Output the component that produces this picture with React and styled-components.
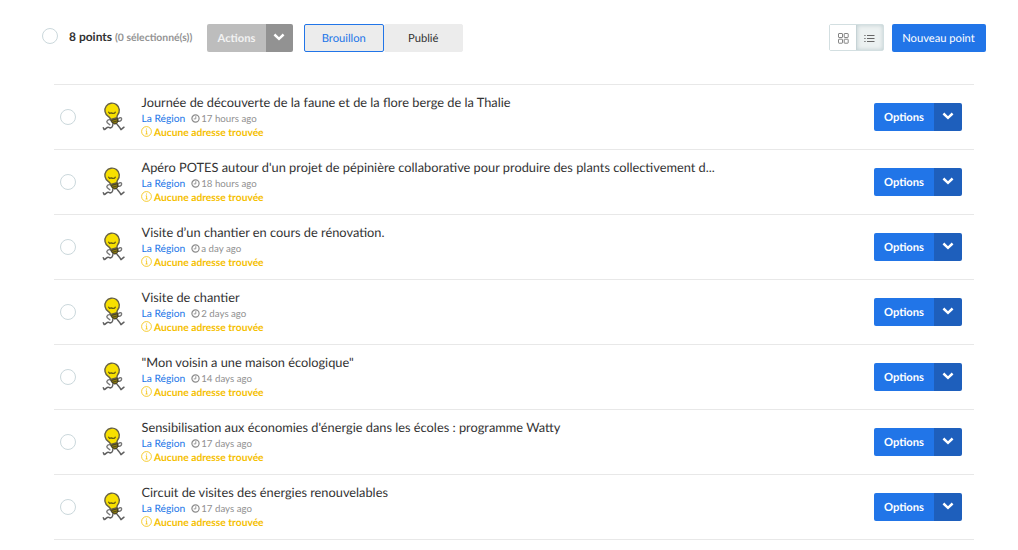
import React, { useState } from "react";
import styled, { createGlobalStyle } from "styled-components";

const points = [
  { title: "Journée de découverte de la faune et de la flore berge de la Thalie", date: "17 hours ago" },
  {
    title: "Apéro POTES autour d'un projet de pépinière collaborative pour produire des plants collectivement d...",
    date: "18 hours ago",
  },
  { title: "Visite d’un chantier en cours de rénovation.", date: "a day ago" },
  { title: "Visite de chantier", date: "2 days ago" },
  { title: "\"Mon voisin a une maison écologique\"", date: "14 days ago" },
  { title: "Sensibilisation aux économies d'énergie dans les écoles : programme Watty", date: "17 days ago" },
  { title: "Circuit de visites des énergies renouvelables", date: "17 days ago" },
];

function Chevron() {
  return (
    <svg width="12" height="8" viewBox="0 0 12 8" fill="none">
      <path d="M1.4 1.5 L6 5.8 L10.6 1.5" stroke="#fff" strokeWidth="2.4" />
    </svg>
  );
}

function Clock() {
  return (
    <svg width="9" height="9" viewBox="0 0 9 9" fill="none" stroke="#8c8c8c">
      <circle cx="4.5" cy="4.5" r="3.6" strokeWidth="1.2" />
      <path d="M4.8 2.2 V4.9 H2.7" strokeWidth="0.9" />
    </svg>
  );
}

function Info() {
  return (
    <svg width="11" height="11" viewBox="0 0 11 11" fill="none" stroke="#f5c000">
      <circle cx="5.5" cy="5.5" r="4.9" strokeWidth="0.8" />
      <path d="M5.5 2.5 V3.6 M4.7 4.8 H5.6 V8 M4.5 8 H6.6" strokeWidth="0.8" />
    </svg>
  );
}

function Bulb() {
  return (
    <svg width="28" height="32" viewBox="0 0 28 32" fill="none" strokeLinecap="round" strokeLinejoin="round">
      <path
        d="M12.5 19.2 C9 17.6 7 20 8.3 21.8 L10.8 23.8 M18.2 19.2 C19.6 16.5 22.6 15.8 22.6 17.9 C22.6 19.6 20.8 20.6 19 20.3"
        stroke="#777"
        strokeWidth="1.4"
      />
      <path
        d="M14 22.5 C13.8 26 12.4 27.8 9.8 26.4 C8.2 25.5 7 27.9 5.2 28.6 L4.3 26.7 M17.3 22 C18.6 24.8 20.4 25.4 22 28.7 L25 26.2"
        stroke="#606060"
        strokeWidth="1.5"
      />
      <path d="M11.8 17.8 L18 16.4 L19.3 20.6 L16 23.2 L12.9 21.4 Z" fill="#4b4420" stroke="#39351e" />
      <path
        d="M10.8 17 C10.6 16.3 10 15.9 9.2 15.4 A7.2 7.2 0 1 1 18.6 14 C18 14.8 17.9 15.6 18 16.6 L11.9 18.4 Z"
        fill="#f7df00"
        stroke="#666044"
        strokeWidth="1.4"
      />
      <path d="M9.6 11.2 L10.6 12.3 L12.2 11.9 L13.8 12.4 L15.6 12.2 L16.3 11.2" stroke="#5c5415" strokeWidth="1.2" />
      <path d="M13.5 20.2 L17.9 19 M14.6 22 L17.8 21" stroke="#b69f00" strokeWidth="0.7" />
    </svg>
  );
}

function GridIcon() {
  return (
    <svg width="11" height="11" viewBox="0 0 11 11" fill="none" stroke="#777" strokeWidth="0.9">
      <rect x="0.5" y="0.5" width="4" height="4" rx="0.5" />
      <rect x="6.2" y="0.5" width="4" height="4" rx="0.5" />
      <rect x="0.5" y="6.2" width="4" height="4" rx="0.5" />
      <rect x="6.2" y="6.2" width="4" height="4" rx="0.5" />
    </svg>
  );
}

function ListIcon() {
  return (
    <svg width="11" height="9" viewBox="0 0 11 9" stroke="#666" strokeWidth="1">
      <path d="M0.3 1.5 H1.6 M3 1.5 H10.5 M0.3 4.5 H1.6 M3 4.5 H10.5 M0.3 7.5 H1.6 M3 7.5 H10.5" />
    </svg>
  );
}

function App() {
  const [status, setStatus] = useState("draft");

  return (
    <Page>
      <GlobalStyle />
      <Toolbar>
        <Radio />
        <Count>
          8 points <small>(0 sélectionné(s))</small>
        </Count>
        <SplitButton $disabled>
          <SplitLabel $disabled>Actions</SplitLabel>
          <SplitToggle $disabled>
            <Chevron />
          </SplitToggle>
        </SplitButton>
        <Tabs>
          <Tab $active={status === "draft"} onClick={() => setStatus("draft")}>
            Brouillon
          </Tab>
          <Tab $active={status === "published"} onClick={() => setStatus("published")}>
            Publié
          </Tab>
        </Tabs>
        <Views>
          <View>
            <GridIcon />
          </View>
          <View $active>
            <ListIcon />
          </View>
        </Views>
        <NewButton>Nouveau point</NewButton>
      </Toolbar>
      <List>
        {points.map((point) => (
          <Row key={point.title}>
            <Radio />
            <Picture>
              <Bulb />
            </Picture>
            <Details>
              <Title>{point.title}</Title>
              <Meta>
                <Author>La Région</Author>
                <Clock />
                <span>{point.date}</span>
              </Meta>
              <Warning>
                <Info />
                <span>Aucune adresse trouvée</span>
              </Warning>
            </Details>
            <SplitButton>
              <SplitLabel>Options</SplitLabel>
              <SplitToggle>
                <Chevron />
              </SplitToggle>
            </SplitButton>
          </Row>
        ))}
      </List>
    </Page>
  );
}

const GlobalStyle = createGlobalStyle`
  * {
    box-sizing: border-box;
  }

  body {
    margin: 0;
    background: #fff;
    overflow: hidden;
    font-family: Lato, "Liberation Sans", sans-serif;
    text-rendering: geometricPrecision;
  }

  button {
    margin: 0;
    padding: 0;
    border: 0;
    font: inherit;
    text-rendering: inherit;
    cursor: pointer;
  }

  svg {
    display: block;
    flex: none;
  }
`;

const Page = styled.div`
  height: 550px;
  padding: 24px 44px 0 42px;
  color: #333;
`;

const Toolbar = styled.div`
  display: flex;
  height: 28px;
`;

const Radio = styled.span`
  flex: none;
  width: 16px;
  height: 16px;
  border: 1px solid #cbd8dc;
  border-radius: 50%;
  background: #fff;

  ${Toolbar} & {
    margin-top: 4px;
  }
`;

const Count = styled.div`
  width: 138px;
  margin-left: 11px;
  font-size: 12px;
  font-weight: 700;
  line-height: 26px;
  white-space: nowrap;

  small {
    color: #949494;
    font-size: 10.4px;
  }
`;

const SplitButton = styled.div`
  display: flex;
  flex: none;
  width: ${(props) => (props.$disabled ? "86px" : "88px")};
  height: 28px;
  border-radius: 2px;
  overflow: hidden;
`;

const SplitLabel = styled.button`
  flex: 1;
  background: ${(props) => (props.$disabled ? "#bdbdbd" : "#2175e8")};
  color: ${(props) => (props.$disabled ? "#f2f2f2" : "#fff")};
  font-size: 11.2px;
  font-weight: 700;
`;

const SplitToggle = styled.button`
  display: flex;
  justify-content: center;
  width: ${(props) => (props.$disabled ? "27px" : "28px")};
  padding: ${(props) => (props.$disabled ? "9px 1px 0 0" : "9px 0 0")};
  background: ${(props) => (props.$disabled ? "#929292" : "#1e5fbc")};
`;

const Tabs = styled.div`
  display: flex;
  width: 159px;
  margin-left: 11px;
`;

const Tab = styled.button`
  flex: 1;
  border: 1px solid ${(props) => (props.$active ? "#2175e8" : "#ececec")};
  border-radius: 2px;
  background: #ececec;
  color: ${(props) => (props.$active ? "#2175e8" : "#333")};
  font-size: 11.2px;
`;

const Views = styled.div`
  display: flex;
  width: 55px;
  height: 27px;
  margin-left: auto;
  border: 1px solid #d3dfe1;
  border-radius: 2px;
`;

const View = styled.button`
  display: flex;
  flex: 1;
  align-items: center;
  justify-content: center;
  padding-top: 1px;
  background: ${(props) => (props.$active ? "#ecf1f1" : "#fff")};
  box-shadow: ${(props) => (props.$active ? "inset 0 0 4px #bdcccf, -1px 0 #c6d3d6" : "none")};
`;

const NewButton = styled.button`
  width: 94px;
  margin: 0 -12px 0 8px;
  padding-right: 1px;
  border-radius: 2px;
  background: #2175e8;
  color: #fff;
  font-size: 11.2px;
`;

const List = styled.div`
  margin: 32px 0 0 12px;
  border-top: 1px solid #e8e8e8;
`;

const Row = styled.div`
  display: flex;
  align-items: center;
  height: 65px;
  padding: 0 12px 0 6px;
  border-bottom: 1px solid #e8e8e8;
`;

const Picture = styled.div`
  margin: 0 14px 0 23px;
`;

const Details = styled.div`
  flex: 1;
  min-width: 0;
  padding-left: 0.5px;
`;

const Title = styled.div`
  padding-bottom: 2px;
  font-size: 12.8px;
  line-height: 15px;
  white-space: nowrap;
`;

const Meta = styled.div`
  display: flex;
  align-items: center;
  gap: 1.5px;
  height: 14px;
  color: #919191;
  font-size: 9.7px;
`;

const Author = styled.span`
  margin-right: 4px;
  color: #2175e8;
  font-size: 10.24px;
`;

const Warning = styled.div`
  display: flex;
  align-items: center;
  gap: 2px;
  height: 14px;
  color: #f5c000;
  font-size: 10.24px;
  font-weight: 700;

  svg {
    margin: 0 0 2px -0.5px;
  }
`;

export default App;
